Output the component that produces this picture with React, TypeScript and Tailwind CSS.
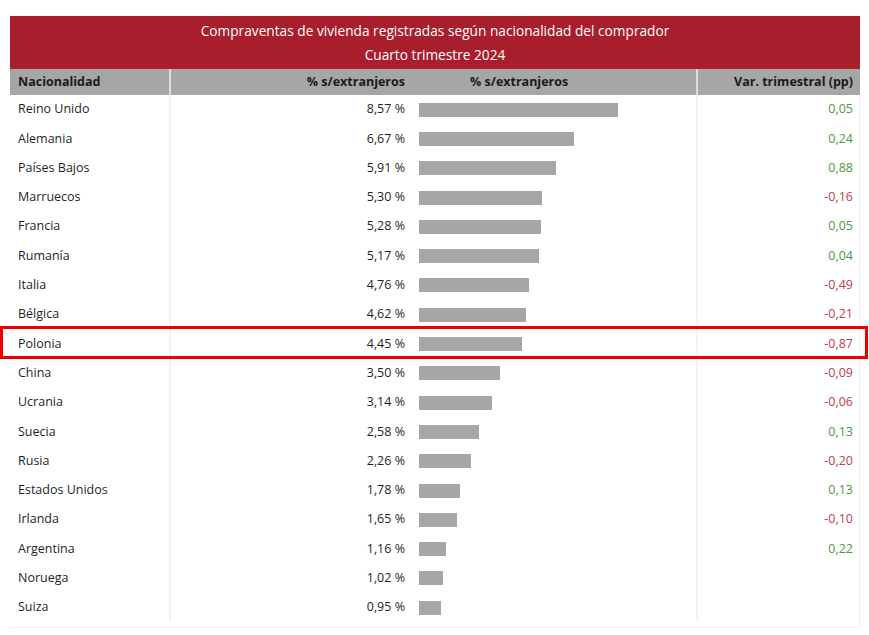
import React from 'react';

type Row = { name: string; pct: number; diff?: string };

const rows: Row[] = [
  { name: 'Reino Unido', pct: 8.57, diff: '0,05' },
  { name: 'Alemania', pct: 6.67, diff: '0,24' },
  { name: 'Países Bajos', pct: 5.91, diff: '0,88' },
  { name: 'Marruecos', pct: 5.3, diff: '-0,16' },
  { name: 'Francia', pct: 5.28, diff: '0,05' },
  { name: 'Rumanía', pct: 5.17, diff: '0,04' },
  { name: 'Italia', pct: 4.76, diff: '-0,49' },
  { name: 'Bélgica', pct: 4.62, diff: '-0,21' },
  { name: 'Polonia', pct: 4.45, diff: '-0,87' },
  { name: 'China', pct: 3.5, diff: '-0,09' },
  { name: 'Ucrania', pct: 3.14, diff: '-0,06' },
  { name: 'Suecia', pct: 2.58, diff: '0,13' },
  { name: 'Rusia', pct: 2.26, diff: '-0,20' },
  { name: 'Estados Unidos', pct: 1.78, diff: '0,13' },
  { name: 'Irlanda', pct: 1.65, diff: '-0,10' },
  { name: 'Argentina', pct: 1.16, diff: '0,22' },
  { name: 'Noruega', pct: 1.02 },
  { name: 'Suiza', pct: 0.95 },
];

const fmt = (n: number) => n.toFixed(2).replace('.', ',') + ' %';

export default function App() {
  return (
    <div
      className="relative h-[635px] w-[869px] bg-white pt-4 text-[12.5px] text-[#1f1f1f]"
      style={{ fontFamily: '"Open Sans", "Noto Sans", sans-serif' }}
    >
      <div className="mx-[10px] w-[850px]">
        {/* title band */}
        <div className="flex h-[53px] flex-col items-center justify-center bg-[#a91e2c] text-[13.7px] leading-[24px] text-white">
          <div>Compraventas de vivienda registradas según nacionalidad del comprador</div>
          <div>Cuarto trimestre 2024</div>
        </div>

        {/* column headers */}
        <div className="grid h-[26px] grid-cols-[159px_241px_286px_164px] items-center bg-[#a6a6a6] font-bold text-[#1a1a1a]">
          <div className="pl-2">Nacionalidad</div>
          <div className="flex h-full items-center justify-end border-l-2 border-[#dcdcdc] pr-[5px]">
            % s/extranjeros
          </div>
          <div className="pl-[60px]">% s/extranjeros</div>
          <div className="flex h-full items-center justify-end border-l-2 border-[#dcdcdc] pr-[7px]">
            Var. trimestral (pp)
          </div>
        </div>

        {/* body */}
        <div className="border-r border-b border-[#f0f0f0] pb-[5px]">
          {rows.map((r) => (
            <div
              key={r.name}
              className="grid h-[29.3px] grid-cols-[159px_241px_286px_164px] items-center"
            >
              <div className="pl-2">{r.name}</div>
              <div className="flex h-full items-center justify-end border-l-2 border-[#f3f3f3] pr-[5px]">
                {fmt(r.pct)}
              </div>
              <div className="flex items-center pl-[9px]">
                <div className="h-[14px] bg-[#a6a6a6]" style={{ width: r.pct * 23.2 }} />
              </div>
              <div
                className={
                  'flex h-full items-center justify-end border-l-2 border-[#f3f3f3] pr-[7px] ' +
                  (r.diff && r.diff.startsWith('-') ? 'text-[#c0404f]' : 'text-[#4e9a3c]')
                }
              >
                {r.diff}
              </div>
            </div>
          ))}
        </div>
      </div>

      {/* highlight around Polonia */}
      <div className="absolute top-[326px] left-0 h-[33px] w-[868px] border-[3px] border-[#ee0000]" />
    </div>
  );
}
